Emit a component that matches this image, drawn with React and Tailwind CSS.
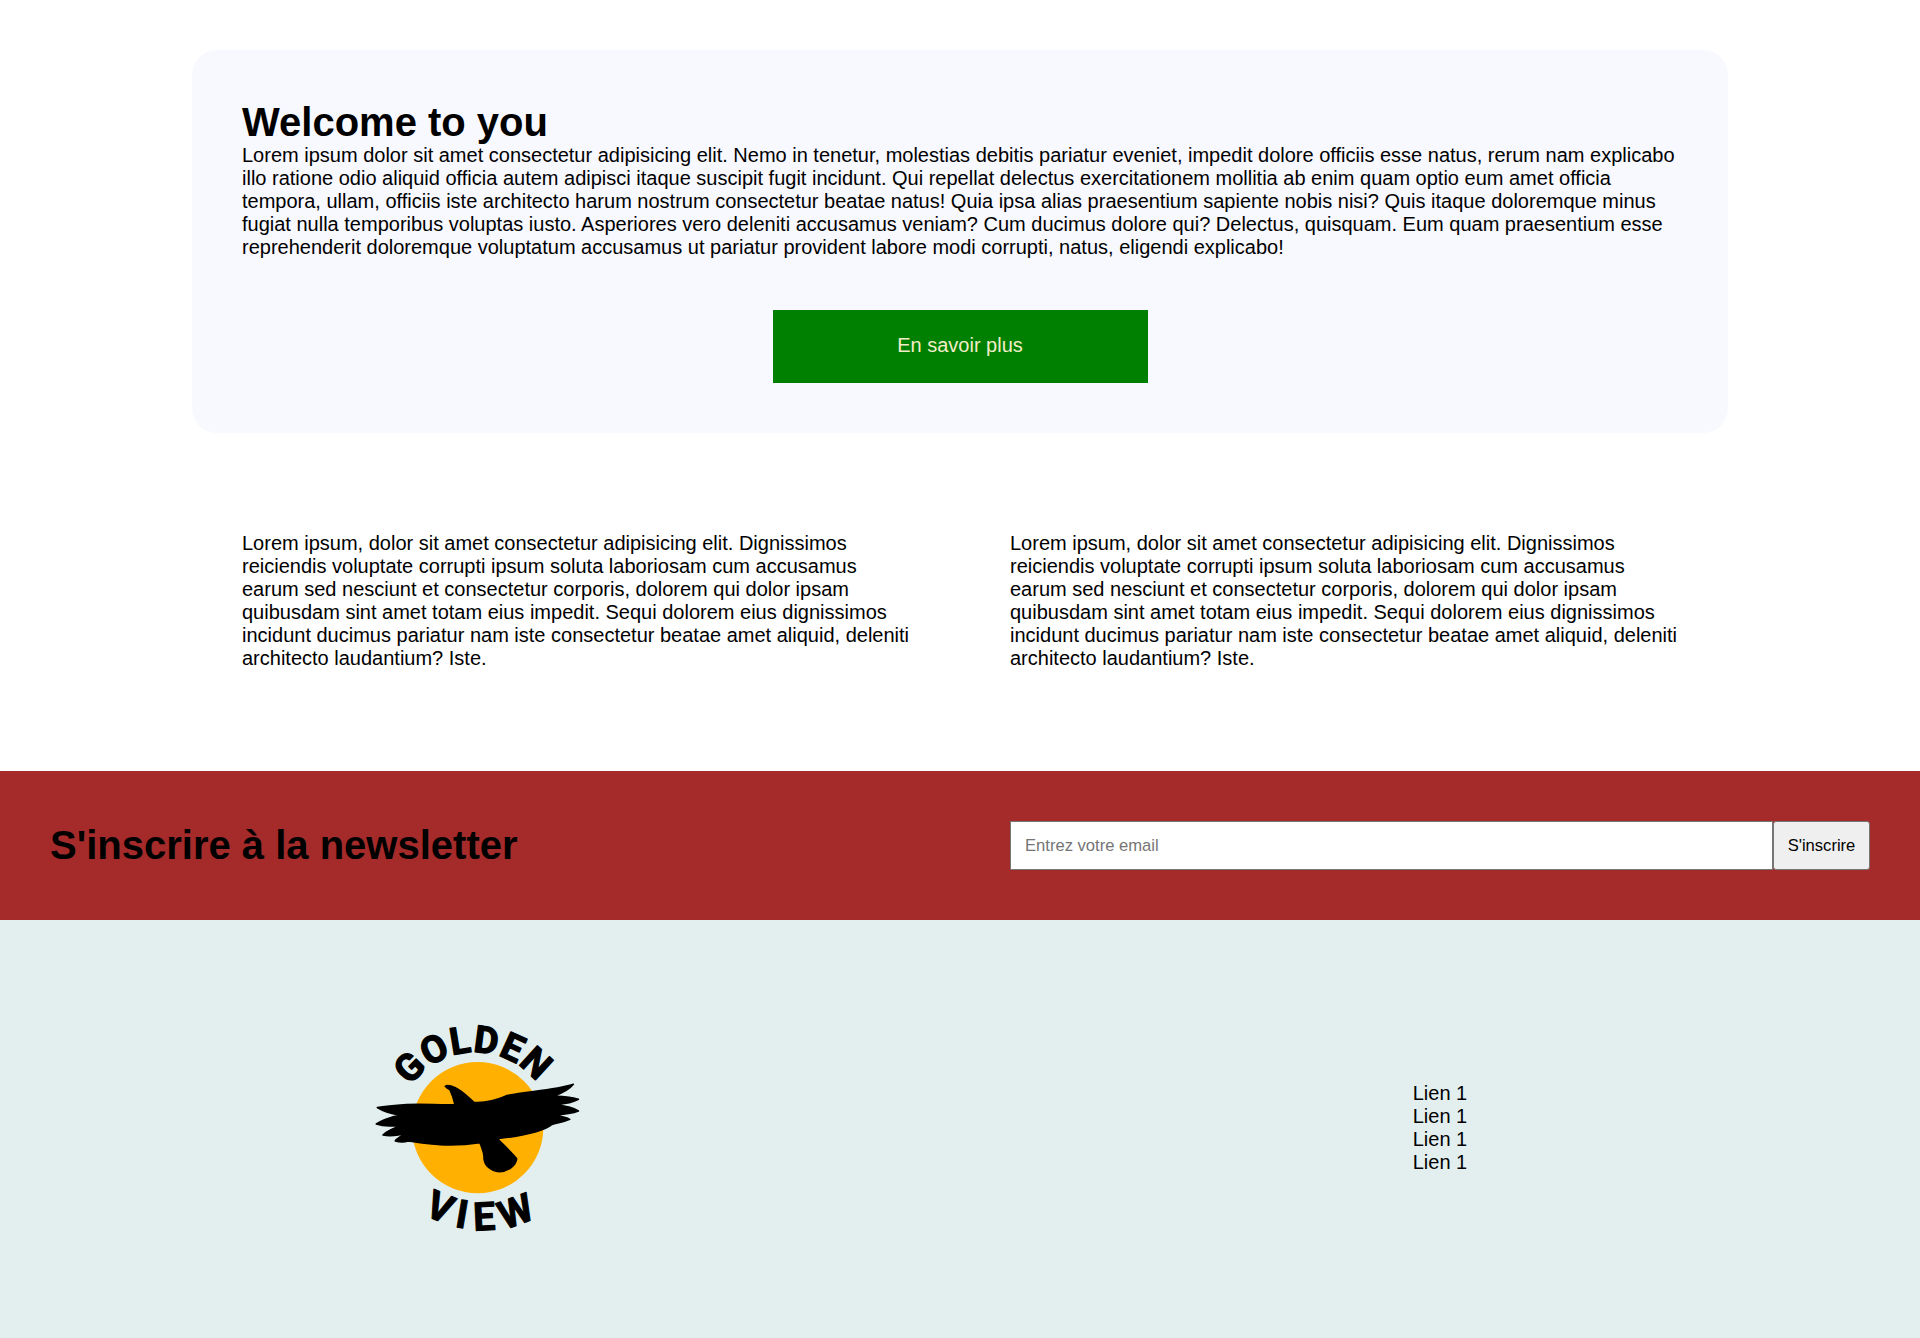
const lorem1 = "Lorem ipsum dolor sit amet consectetur adipisicing elit. Nemo in tenetur, molestias debitis pariatur eveniet, impedit dolore officiis esse natus, rerum nam explicabo illo ratione odio aliquid officia autem adipisci itaque suscipit fugit incidunt. Qui repellat delectus exercitationem mollitia ab enim quam optio eum amet officia tempora, ullam, officiis iste architecto harum nostrum consectetur beatae natus! Quia ipsa alias praesentium sapiente nobis nisi? Quis itaque doloremque minus fugiat nulla temporibus voluptas iusto. Asperiores vero deleniti accusamus veniam? Cum ducimus dolore qui? Delectus, quisquam. Eum quam praesentium esse reprehenderit doloremque voluptatum accusamus ut pariatur provident labore modi corrupti, natus, eligendi explicabo!";
const lorem2 = "Lorem ipsum, dolor sit amet consectetur adipisicing elit. Dignissimos reiciendis voluptate corrupti ipsum soluta laboriosam cum accusamus earum sed nesciunt et consectetur corporis, dolorem qui dolor ipsam quibusdam sint amet totam eius impedit. Sequi dolorem eius dignissimos incidunt ducimus pariatur nam iste consectetur beatae amet aliquid, deleniti architecto laudantium? Iste.";

function Logo() {
  return (
    <svg className="w-[280px] h-[258px] block" viewBox="0 0 840 774">
      <defs>
        <path id="arcTop" d="M 175 344 A 235 235 0 0 1 635 344" fill="none" />
        <path id="arcBottom" d="M 225 624 A 350 350 0 0 0 635 624" fill="none" />
      </defs>
      <circle cx="413" cy="383" r="197" fill="#ffb000" />
      <path
        fill="#000"
        stroke="#000"
        strokeWidth="5"
        strokeLinejoin="round"
        d="M316 259 C322 254 334 258 346 263 C366 272 385 292 402 307 C430 309 470 300 500 287 C560 274 640 272 700 253 C688 268 665 280 642 288 C668 289 698 291 715 298 C700 307 670 312 646 314 C670 317 698 323 715 333 C695 341 665 344 640 346 C660 348 678 351 689 358 C675 365 655 368 636 373 C610 394 560 406 472 416 C490 435 513 455 530 476 C528 495 505 515 478 515 C450 513 434 495 432 475 C434 460 425 442 420 428 C380 434 340 436 300 434 C270 433 240 428 205 423 C190 427 178 426 166 423 C172 412 190 404 205 398 C180 405 150 409 129 405 C142 392 170 381 192 373 C165 378 130 379 109 372 C125 361 155 351 178 345 C155 342 128 333 112 323 C140 318 170 316 200 314 C250 311 300 316 345 314 C342 300 336 282 330 269 C324 266 319 263 316 259 Z"
      />
      <text fontFamily="Roboto, sans-serif" fontWeight="700" fontSize="112" fill="#000" stroke="#000" strokeWidth="4" strokeLinejoin="round" letterSpacing="2" textAnchor="middle">
        <textPath href="#arcTop" startOffset="49%">GOLDEN</textPath>
      </text>
      <text fontFamily="Roboto, sans-serif" fontWeight="700" fontSize="118" fill="#000" stroke="#000" strokeWidth="3" strokeLinejoin="round" letterSpacing="24" textAnchor="middle">
        <textPath href="#arcBottom" startOffset="50%">VIEW</textPath>
      </text>
    </svg>
  );
}

export default function App() {
  return (
    <div className="font-['Liberation_Sans',sans-serif] text-[20px] leading-[23px] text-black bg-white">
      <main className="w-[80%] mx-auto pt-[50px]">
        <section className="bg-[#f8f8ff] rounded-[25px] p-[50px]">
          <h1 className="text-[40px] font-bold leading-[44px]">Welcome to you</h1>
          <p>{lorem1}</p>
          <div className="flex justify-center mt-[51px]">
            <button className="w-[375px] px-[25px] pt-[24px] pb-[26px] bg-[#008000] text-[#f2edc8] text-[20px] leading-[23px]">En savoir plus</button>
          </div>
        </section>
        <section className="grid grid-cols-2 mt-[50px] mb-[50px]">
          <p className="px-[50px] pt-[49px] pb-[51px]">{lorem2}</p>
          <p className="px-[50px] pt-[49px] pb-[51px]">{lorem2}</p>
        </section>
      </main>
      <section className="grid grid-cols-2 items-center bg-[#a52a2a] py-[50px]">
        <h2 className="pl-[50px] pb-[2px] text-[40px] font-bold leading-[46px]">S'inscrire à la newsletter</h2>
        <form className="flex px-[50px]">
          <input
            type="email"
            placeholder="Entrez votre email"
            className="flex-1 min-w-0 h-[49px] px-[14px] bg-white border border-[#767676] text-[16.6px] placeholder:text-[#757575]"
          />
          <button type="button" className="w-[97px] h-[49px] bg-[#efefef] border border-[#767676] rounded-[3px] text-[16.6px]">S'inscrire</button>
        </form>
      </section>
      <footer className="grid grid-cols-2 items-center bg-[#e3efef] h-[418px]">
        <div className="flex justify-center"><Logo /></div>
        <div className="flex justify-center">
          <ul className="pb-[2px]">
            <li>Lien 1</li>
            <li>Lien 1</li>
            <li>Lien 1</li>
            <li>Lien 1</li>
          </ul>
        </div>
      </footer>
    </div>
  );
}
